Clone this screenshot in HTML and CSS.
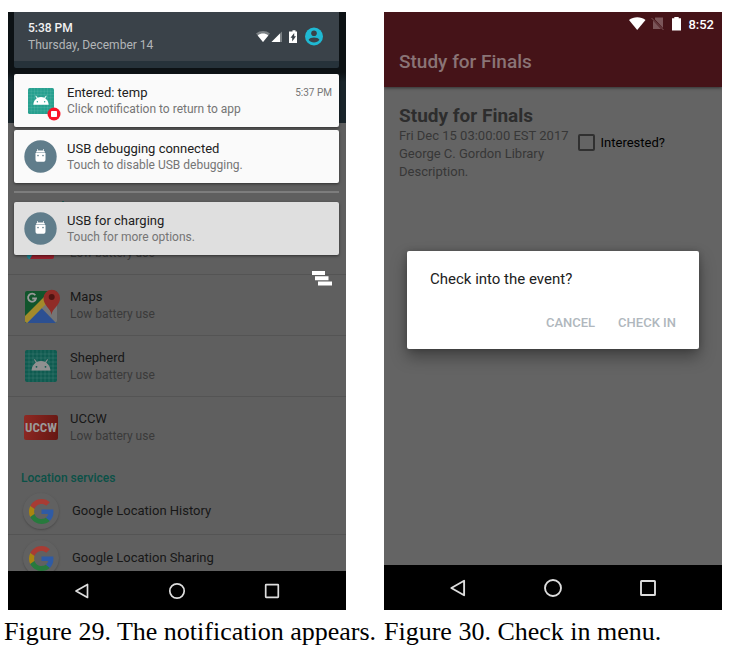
FILE: index.html
```html
<!DOCTYPE html>
<html lang="en">
<head>
<meta charset="utf-8">
<meta name="viewport" content="width=device-width, initial-scale=1">
<title>Figures 29 and 30</title>
<link rel="stylesheet" href="styles.css">
</head>
<body>
<svg class="defs" aria-hidden="true">
  <symbol id="google" viewBox="0 0 48 48">
    <path fill="#a83c34" d="M24 9.500c3.540 0 6.710 1.220 9.210 3.600l6.850-6.850C35.900 2.380 30.470 0 24 0 14.620 0 6.510 5.380 2.560 13.220l7.980 6.190C12.430 13.720 17.740 9.500 24 9.500z"/>
    <path fill="#2f5ba5" d="M46.980 24.550c0-1.570-.15-3.090-.38-4.550H24v9.020h12.940c-.58 2.960-2.260 5.480-4.780 7.180l7.730 6c4.510-4.180 7.090-10.360 7.090-17.650z"/>
    <path fill="#a98510" d="M10.530 28.590c-.48-1.450-.76-2.990-.76-4.590s.27-3.140.76-4.590l-7.980-6.190C.92 16.460 0 20.120 0 24c0 3.880.92 7.540 2.560 10.780l7.970-6.190z"/>
    <path fill="#277a3d" d="M24 48c6.480 0 11.930-2.130 15.890-5.810l-7.730-6c-2.150 1.450-4.920 2.300-8.160 2.300-6.260 0-11.570-4.220-13.470-9.910l-7.980 6.190C6.510 42.620 14.620 48 24 48z"/>
  </symbol>
  <symbol id="droid" viewBox="0 0 32 32">
    <rect width="32" height="32" rx="2" fill="currentColor"/>
    <path d="M4 0v32M8 0v32M12 0v32M16 0v32M20 0v32M24 0v32M28 0v32M0 4h32M0 8h32M0 12h32M0 16h32M0 20h32M0 24h32M0 28h32" stroke="#fff" stroke-opacity=".14" stroke-width=".7"/>
    <path d="M6.500 20.500c.4-3.800 2-6.400 4.300-8L9 9.700l.8-.6 2 2.800c2.600-1.200 5.800-1.200 8.400 0l2-2.800.8.600-1.800 2.800c2.300 1.600 3.900 4.200 4.300 8z" class="droid-head"/>
    <circle cx="11.500" cy="16.800" r=".9" fill="currentColor"/><circle cx="20.500" cy="16.800" r=".9" fill="currentColor"/>
  </symbol>
  <symbol id="usb" viewBox="0 0 33 33">
    <circle cx="16.500" cy="16.500" r="16.200" fill="#607d8b"/>
    <path fill="#fff" d="M11.500 13h10v6.200a2.600 2.600 0 0 1-2.600 2.600h-4.800a2.600 2.600 0 0 1-2.600-2.600zM11.900 12.400c.2-1 .8-1.500 1.500-1.700l-.5-1.400.6-.3.700 1.500h4.600l.7-1.500.6.3-.5 1.400c.7.200 1.300.7 1.500 1.700z"/>
    <circle cx="14" cy="15.600" r=".8" fill="#607d8b"/><circle cx="19" cy="15.600" r=".8" fill="#607d8b"/>
  </symbol>
  <symbol id="back" viewBox="0 0 18 18"><path d="M3 9 14.500 2.500v13z" fill="none" stroke="#ddd" stroke-width="1.700" stroke-linejoin="round"/></symbol>
  <symbol id="home" viewBox="0 0 18 18"><circle cx="9" cy="9" r="7.200" fill="none" stroke="#ddd" stroke-width="1.700"/></symbol>
  <symbol id="recent" viewBox="0 0 18 18"><rect x="2.700" y="2.700" width="12.600" height="12.600" rx=".5" fill="none" stroke="#ddd" stroke-width="1.700"/></symbol>
</svg>

<main class="figures">
  <figure class="figure">
    <div class="phone">
      <div class="screen screen-shade">
        <div class="settings">
          <div class="settings-bar"></div>
          <h2 class="section section-first">Recent location requests</h2>
          <ul class="rows">
            <li class="row">
              <svg class="app-icon" viewBox="0 0 32 32" aria-hidden="true"><rect x="2" y="3" width="27" height="28" rx="2" fill="#95202c"/><path d="M2 24h7l-4 7H4a2 2 0 0 1-2-2z" fill="#1b8490"/></svg>
              <p class="row-sub row-sub-alone">Low battery use</p>
            </li>
            <li class="row">
              <svg class="app-icon app-maps" viewBox="0 0 36 36" aria-hidden="true">
                <rect x="0" y="4" width="32" height="32" rx="2" fill="#11552c"/>
                <path d="M0 34V30L24 8l8 8v18a2 2 0 0 1-2 2H2z" fill="#757575"/>
                <path d="M2 36 16.500 21 31 36z" fill="#2c5092"/>
                <path d="M0 34.500V29L21 8l5 4L2 36z" fill="#a38a2b"/>
                <path d="M26.500 28c-.7-7-8-9-8-17a8.200 8.200 0 0 1 16.500 0c0 8-7.800 10-8.500 17z" fill="#902c27"/>
                <circle cx="26.700" cy="10" r="3" fill="#501512"/>
                <path d="M10.300 8.300A4 4 0 1 0 11 11.500H7.200" fill="none" stroke="#999" stroke-width="1.800"/>
              </svg>
              <div><p class="row-title">Maps</p><p class="row-sub">Low battery use</p></div>
            </li>
            <li class="row">
              <svg class="app-icon droid-dim" aria-hidden="true"><use href="#droid"/></svg>
              <div><p class="row-title">Shepherd</p><p class="row-sub">Low battery use</p></div>
            </li>
            <li class="row">
              <span class="app-icon uccw" aria-hidden="true">UCCW</span>
              <div><p class="row-title">UCCW</p><p class="row-sub">Low battery use</p></div>
            </li>
          </ul>
          <h2 class="section">Location services</h2>
          <ul class="rows">
            <li class="row row-short"><span class="disc"><svg aria-hidden="true"><use href="#google"/></svg></span><p class="row-title">Google Location History</p></li>
            <li class="row row-short"><span class="disc"><svg aria-hidden="true"><use href="#google"/></svg></span><p class="row-title">Google Location Sharing</p></li>
          </ul>
        </div>

        <div class="shade">
          <header class="shade-head">
            <div>
              <p class="clock">5:38 PM</p>
              <p class="date">Thursday, December 14</p>
            </div>
            <svg class="shade-status" viewBox="0 0 68 20" aria-hidden="true">
              <path d="M0 6.500C4 3.200 10 3.200 14 6.500L7 15z" fill="#7b8185"/><path d="M1.700 8.400c3.200-2.500 7.400-2.500 10.600 0L7 15z" fill="#fff"/>
              <path d="M26 4.500V15H15.500z" fill="#7b8185"/><path d="M24 6.500V15h-8.500z" fill="#fff"/>
              <path d="M35 4.500h1.500V3.200h3v1.300H41v11.500h-8V4.500z" fill="#fff"/><path d="M38.200 6v3.300H40L36.200 14.500v-3.700h-1.700z" fill="#3a4249"/>
              <circle cx="58" cy="9.500" r="9" fill="#1fb9d3"/><circle cx="58" cy="6.200" r="2.800" fill="#3a4249"/><path d="M52.600 12.800c1.700-3 9.100-3 10.800 0-2.400 3.500-8.400 3.500-10.800 0z" fill="#3a4249"/>
            </svg>
          </header>
          <article class="note">
            <span class="note-icon">
              <svg class="note-app" aria-hidden="true"><use href="#droid"/></svg>
              <svg class="badge" viewBox="0 0 14 14" aria-hidden="true"><circle cx="7" cy="7" r="6.500" fill="#fa1428"/><rect x="4" y="4" width="6" height="6" rx=".7" fill="#fff"/></svg>
            </span>
            <div class="note-text"><h3>Entered: temp</h3><p>Click notification to return to app</p></div>
            <time class="note-time">5:37 PM</time>
          </article>
          <article class="note">
            <span class="note-icon"><svg class="note-usb" aria-hidden="true"><use href="#usb"/></svg></span>
            <div class="note-text"><h3>USB debugging connected</h3><p>Touch to disable USB debugging.</p></div>
          </article>
          <hr class="speed-bump">
          <article class="note note-low">
            <span class="note-icon"><svg class="note-usb" aria-hidden="true"><use href="#usb"/></svg></span>
            <div class="note-text"><h3>USB for charging</h3><p>Touch for more options.</p></div>
          </article>
          <button class="clear" type="button" aria-label="Clear all">
            <svg viewBox="0 0 20 15" aria-hidden="true"><path d="M0 0h13v4H0zM3 5.300h13.500v4H3zM6 10.600h14v4H6z" fill="#fff"/></svg>
          </button>
        </div>
      </div>
      <nav class="nav" aria-label="System navigation">
        <button type="button" aria-label="Back"><svg aria-hidden="true"><use href="#back"/></svg></button>
        <button type="button" aria-label="Home"><svg aria-hidden="true"><use href="#home"/></svg></button>
        <button type="button" aria-label="Recent apps"><svg aria-hidden="true"><use href="#recent"/></svg></button>
      </nav>
    </div>
    <figcaption class="caption caption-wide">Figure 29. The notification appears.</figcaption>
  </figure>

  <figure class="figure">
    <div class="phone">
      <div class="screen screen-event">
        <header class="app-head">
          <div class="status">
            <svg viewBox="0 0 54 16" aria-hidden="true">
              <path d="M0 4C4.500.200 12 .200 16.500 4L8.200 14z" fill="#fff"/>
              <path d="M26 1.500h8V12l-8-8.500zM24 4.500 32 13h-8z" fill="#7b5559"/><path d="m22.500 2 12 12" stroke="#7b5559" stroke-width="1"/>
              <path d="M43 2.300h2.300V1h4.400v1.300H52V14.500h-9z" fill="#fff"/>
            </svg>
            <time>8:52</time>
          </div>
          <h1 class="app-title">Study for Finals</h1>
        </header>
        <section class="event">
          <div>
            <h2>Study for Finals</h2>
            <p>Fri Dec 15 03:00:00 EST 2017</p>
            <p>George C. Gordon Library</p>
            <p>Description.</p>
          </div>
          <label class="interest"><input type="checkbox">Interested?</label>
        </section>
        <div class="dialog-layer">
          <div class="dialog" role="dialog" aria-labelledby="ask">
            <p id="ask">Check into the event?</p>
            <div class="dialog-actions"><button type="button">CANCEL</button><button type="button">CHECK IN</button></div>
          </div>
        </div>
      </div>
      <nav class="nav nav-tall" aria-label="System navigation">
        <button type="button" aria-label="Back"><svg aria-hidden="true"><use href="#back"/></svg></button>
        <button type="button" aria-label="Home"><svg aria-hidden="true"><use href="#home"/></svg></button>
        <button type="button" aria-label="Recent apps"><svg aria-hidden="true"><use href="#recent"/></svg></button>
      </nav>
    </div>
    <figcaption class="caption">Figure 30. Check in menu.</figcaption>
  </figure>
</main>
</body>
</html>
```
FILE: styles.css
```css
* { box-sizing: border-box; margin: 0; padding: 0; }
body { background: #fff; font-family: Roboto, "Liberation Sans", sans-serif; }
button { background: none; border: 0; font: inherit; }
ul { list-style: none; }
svg { display: block; }
.defs { position: absolute; width: 0; height: 0; }

.figures {
  display: grid;
  grid-template-columns: 1fr 1fr;
  gap: 38px;
  padding: 12px 20px 0 8px;
}
.figure { min-width: 0; display: flex; flex-direction: column; }
.phone { flex: 1; display: flex; flex-direction: column; }
.screen { flex: 1; position: relative; overflow: hidden; }
.caption {
  font: 26px/28px "Liberation Serif", serif;
  color: #000;
  white-space: nowrap;
  padding-top: 8px;
}
.caption-wide { margin-left: -4px; }

.nav { background: #000; height: 39px; display: flex; justify-content: center; align-items: center; }
.nav-tall { height: 45px; }
.nav button { width: 95px; height: 36px; display: grid; place-items: center; }
.nav svg { width: 18px; height: 18px; }
.nav-tall svg { width: 20px; height: 20px; }

/* Dimmed settings list behind the shade */
.screen-shade { background: #5f5f5f; max-height: 559px; }
.settings-bar { height: 111px; background: linear-gradient(#0c1114 60px, #19242a 70px); }
.section { height: 30px; padding: 11px 13px 0; font-size: 12px; line-height: 18px; font-weight: 500; color: #0a5147; }
.section-first { height: 91px; padding-top: 75px; }
.row { display: flex; align-items: center; gap: 13px; height: 61px; padding-left: 17px; border-bottom: 1px solid #545454; }
.row:last-child { border-bottom-color: transparent; }
.row-short { height: 47px; padding-left: 15px; }
.row-title { font-size: 13px; line-height: 18px; color: #171717; }
.row-sub { font-size: 12px; line-height: 16px; color: #3a3a3a; }
.row-sub-alone { padding-top: 18px; }
.app-icon { width: 32px; height: 32px; flex: none; }
.app-maps { width: 36px; height: 36px; margin-right: -4px; }
.droid-head { fill: var(--droid-head, #fff); }
.droid-dim { color: #0f5b50; --droid-head: #909090; }
.uccw {
  width: 34px;
  height: 25px;
  margin: 0 -1px;
  border-radius: 2px;
  background: linear-gradient(100deg, #8f2923, #651713);
  color: #9a9a9a;
  font: bold 13px/25px "Roboto Condensed", "Liberation Sans Narrow", sans-serif;
  text-align: center;
}
.disc { width: 36px; height: 36px; border-radius: 50%; background: #616161; box-shadow: 0 1px 2px #4a4a4a; display: grid; place-items: center; }
.disc svg { width: 25px; height: 25px; }

/* Notification shade */
.shade { position: absolute; inset: 0 7px auto 6px; display: flex; flex-direction: column; }
.shade-head {
  height: 56px;
  display: flex;
  justify-content: space-between;
  padding: 8px 15px 0 14px;
  background: #3a4249;
  border-bottom: 7px solid #26323a;
  border-radius: 0 0 2px 2px;
  margin-bottom: 6px;
}
.clock { font-size: 12px; line-height: 17px; font-weight: 500; color: #f2f2f2; }
.date { font-size: 12px; line-height: 17px; color: #b3b6b8; }
.shade-status { width: 68px; height: 20px; margin-top: 7px; }
.note {
  height: 53px;
  display: flex;
  align-items: center;
  padding-right: 7px;
  margin-bottom: 3px;
  border-radius: 2px;
  background: #fafafa;
  box-shadow: 0 1px 3px rgba(0, 0, 0, .5);
}
.note-low { background: #dfdfdf; }
.note-icon { width: 53px; display: grid; place-items: center; position: relative; }
.note-app { width: 26px; height: 26px; color: #26a08f; }
.note-usb { width: 33px; height: 33px; }
.badge { position: absolute; width: 14px; height: 14px; right: 6px; bottom: -7px; }
.note-text { flex: 1; }
.note-text h3 { font-size: 13px; line-height: 17px; font-weight: 400; color: #212121; }
.note-text p { font-size: 12px; line-height: 17px; color: #757575; }
.note-time { font-size: 10px; line-height: 17px; align-self: flex-start; margin-top: 10px; color: #757575; }
.speed-bump { border: 0; height: 2px; margin: 5px 0 9px; background: #7d7d7d; }
.clear { align-self: flex-end; margin: 13px 7px 0 0; }
.clear svg { width: 20px; height: 15px; }

/* Event screen */
.screen-event { background: #646464; }
.app-head { position: relative; background: #451318; box-shadow: 0 1px 3px rgba(0, 0, 0, .5); }
.status { height: 24px; display: flex; justify-content: flex-end; align-items: center; gap: 5px; padding-right: 8px; color: #fff; font-size: 13px; font-weight: 500; }
.status svg { width: 54px; height: 16px; }
.app-title { height: 51px; padding-left: 15px; font-size: 19px; line-height: 51px; font-weight: 500; color: #8a7476; }
.event { display: flex; align-items: center; gap: 9px; padding: 17px 15px; color: #373737; font-size: 13px; line-height: 18px; white-space: nowrap; }
.event h2 { font-size: 19px; line-height: 23px; font-weight: 700; color: #2d2d2d; }
.interest { display: flex; align-items: center; gap: 6px; color: #000; }
.interest input { appearance: none; width: 17px; height: 17px; border: 2px solid #303030; border-radius: 2px; }

.dialog-layer { position: absolute; inset: 24px 0 0; display: grid; align-items: center; padding: 0 23px 2px; }
.dialog { background: #fff; border-radius: 2px; padding: 17px 15px 14px 23px; box-shadow: 0 8px 16px rgba(0, 0, 0, .35), 0 0 6px rgba(0, 0, 0, .2); }
.dialog p { font-size: 15px; line-height: 22px; color: #212121; }
.dialog-actions { display: flex; justify-content: flex-end; gap: 7px; margin-top: 20px; }
.dialog-actions button { padding: 0 8px; font-size: 13px; line-height: 25px; font-weight: 500; color: #b0b7bd; }
```
